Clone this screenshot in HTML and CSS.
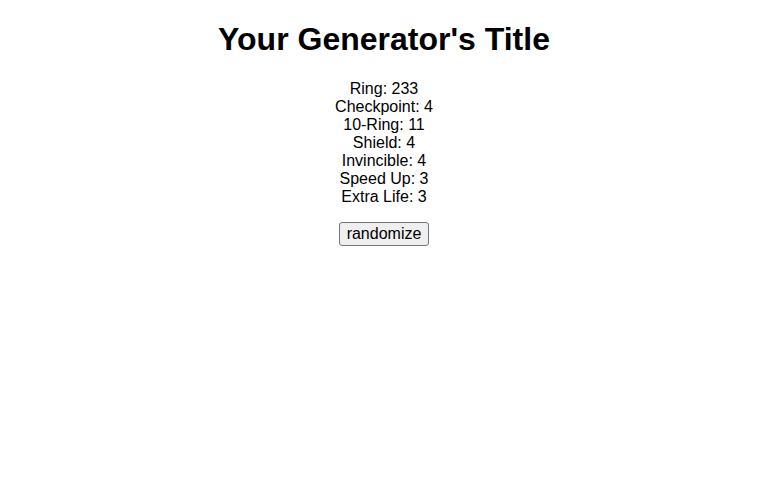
FILE: index.html
```html
<!DOCTYPE html>
<html>
<head>
<meta charset="utf-8">
<link rel="stylesheet" href="styles.css">
</head>
<body class="page">
<h1 class="title">Your Generator's Title</h1>
<div class="results">
<div class="line">Ring: 233</div>
<div class="line">Checkpoint: 4</div>
<div class="line">10-Ring: 11</div>
<div class="line">Shield: 4</div>
<div class="line">Invincible: 4</div>
<div class="line">Speed Up: 3</div>
<div class="line">Extra Life: 3</div>
</div>
<div class="actions"><button class="btn">randomize</button></div>
</body>
</html>
```
FILE: styles.css
```css
.page {
  margin: 0;
  font-family: "Liberation Sans", Arial, sans-serif;
  font-size: 16px;
  text-align: center;
  color: #000;
  background: #fff;
}
.title {
  font-size: 32px;
  font-weight: bold;
  margin: 21px 0 22px;
}
.results {
  line-height: 18px;
}
.actions {
  margin-top: 16px;
}
.btn {
  font-family: "Liberation Sans", Arial, sans-serif;
  font-size: 16px;
  line-height: 18px;
  padding: 2px 7px;
  border: 1px solid #767676;
  border-radius: 3px;
  background: #efefef;
  color: #000;
}
```
